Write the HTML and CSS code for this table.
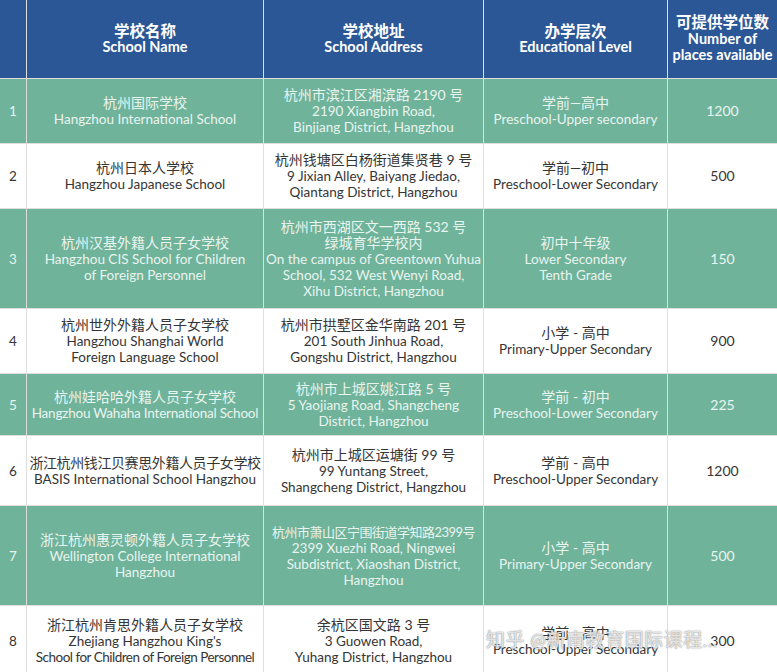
FILE: index.html
```html
<!DOCTYPE html>
<html lang="zh">
<head>
<meta charset="utf-8">
<title>杭州外籍人员子女学校</title>
<link rel="stylesheet" href="styles.css">
</head>
<body>
<div class="sheet">
  <div class="row head">
    <div class="c"></div>
    <div class="c"><span class="zh">学校名称</span><span>School Name</span></div>
    <div class="c"><span class="zh">学校地址</span><span>School Address</span></div>
    <div class="c"><span class="zh">办学层次</span><span>Educational Level</span></div>
    <div class="c"><span class="zh">可提供学位数</span><span>Number of</span><span>places available</span></div>
  </div>
  <div class="row g">
    <div class="c">1</div>
    <div class="c"><span class="zh">杭州国际学校</span><span>Hangzhou International School</span></div>
    <div class="c"><span class="zh">杭州市滨江区湘滨路 2190 号</span><span>2190 Xiangbin Road,</span><span>Binjiang District, Hangzhou</span></div>
    <div class="c"><span class="zh">学前—高中</span><span>Preschool-Upper secondary</span></div>
    <div class="c num">1200</div>
  </div>
  <div class="row w">
    <div class="c">2</div>
    <div class="c"><span class="zh">杭州日本人学校</span><span>Hangzhou Japanese School</span></div>
    <div class="c"><span class="zh">杭州钱塘区白杨街道集贤巷 9 号</span><span>9 Jixian Alley, Baiyang Jiedao,</span><span>Qiantang District, Hangzhou</span></div>
    <div class="c"><span class="zh">学前—初中</span><span>Preschool-Lower Secondary</span></div>
    <div class="c num">500</div>
  </div>
  <div class="row g">
    <div class="c">3</div>
    <div class="c"><span class="zh">杭州汉基外籍人员子女学校</span><span>Hangzhou CIS School for Children</span><span>of Foreign Personnel</span></div>
    <div class="c"><span class="zh">杭州市西湖区文一西路 532 号</span><span class="zh">绿城育华学校内</span><span>On the campus of Greentown Yuhua</span><span>School, 532 West Wenyi Road,</span><span>Xihu District, Hangzhou</span></div>
    <div class="c"><span class="zh">初中十年级</span><span>Lower Secondary</span><span>Tenth Grade</span></div>
    <div class="c num">150</div>
  </div>
  <div class="row w">
    <div class="c">4</div>
    <div class="c"><span class="zh">杭州世外外籍人员子女学校</span><span>Hangzhou Shanghai World</span><span>Foreign Language School</span></div>
    <div class="c"><span class="zh">杭州市拱墅区金华南路 201 号</span><span>201 South Jinhua Road,</span><span>Gongshu District, Hangzhou</span></div>
    <div class="c"><span class="zh">小学 - 高中</span><span>Primary-Upper Secondary</span></div>
    <div class="c num">900</div>
  </div>
  <div class="row g">
    <div class="c">5</div>
    <div class="c"><span class="zh">杭州娃哈哈外籍人员子女学校</span><span class="tight">Hangzhou Wahaha International School</span></div>
    <div class="c"><span class="zh">杭州市上城区姚江路 5 号</span><span>5 Yaojiang Road, Shangcheng</span><span>District, Hangzhou</span></div>
    <div class="c"><span class="zh">学前 - 初中</span><span>Preschool-Lower Secondary</span></div>
    <div class="c num">225</div>
  </div>
  <div class="row w">
    <div class="c">6</div>
    <div class="c"><span class="zh tight">浙江杭州钱江贝赛思外籍人员子女学校</span><span>BASIS International School Hangzhou</span></div>
    <div class="c"><span class="zh">杭州市上城区运塘街 99 号</span><span>99 Yuntang Street,</span><span>Shangcheng District, Hangzhou</span></div>
    <div class="c"><span class="zh">学前 - 高中</span><span>Preschool-Upper Secondary</span></div>
    <div class="c num">1200</div>
  </div>
  <div class="row g">
    <div class="c">7</div>
    <div class="c"><span class="zh">浙江杭州惠灵顿外籍人员子女学校</span><span>Wellington College International</span><span>Hangzhou</span></div>
    <div class="c"><span class="zh squeeze">杭州市萧山区宁围街道学知路2399号</span><span>2399 Xuezhi Road, Ningwei</span><span>Subdistrict, Xiaoshan District,</span><span>Hangzhou</span></div>
    <div class="c"><span class="zh">小学 - 高中</span><span>Primary-Upper Secondary</span></div>
    <div class="c num">500</div>
  </div>
  <div class="row w">
    <div class="c">8</div>
    <div class="c"><span class="zh">浙江杭州肯思外籍人员子女学校</span><span>Zhejiang Hangzhou King's</span><span class="tighter">School for Children of Foreign Personnel</span></div>
    <div class="c"><span class="zh">余杭区国文路 3 号</span><span>3 Guowen Road,</span><span>Yuhang District, Hangzhou</span></div>
    <div class="c"><span class="zh">学前 - 高中</span><span>Preschool-Upper Secondary</span></div>
    <div class="c num">300</div>
  </div>
  <div class="mark">知乎 @新南教育国际课程...</div>
</div>
</body>
</html>
```

FILE: styles.css
```css
html, body {
  margin: 0;
  padding: 0;
  background: #ffffff;
}
.sheet {
  position: relative;
  width: 777px;
  height: 672px;
  overflow: hidden;
  display: grid;
  grid-template-columns: 26px 236px 219px 183px 109px;
  grid-template-rows: 78px 64px 64px 99px 64px 61px 69px 99px 70px;
  gap: 1px;
  background: #dedede;
  font-family: "Lato", "Noto Sans CJK SC", sans-serif;
  font-size: 13.5px;
  line-height: 16px;
}
.row {
  display: contents;
}
.c {
  display: flex;
  flex-direction: column;
  align-items: center;
  justify-content: center;
  text-align: center;
  white-space: nowrap;
  overflow: visible;
}
.c span {
  display: block;
}
.zh {
  font-size: 14px;
}
.num {
  font-size: 14px;
}
.head .c {
  background: #2b5797;
  color: #ffffff;
  font-weight: 700;
  font-size: 14.5px;
  line-height: 16.5px;
}
.head .zh {
  font-size: 15.5px;
}
.g .c {
  background: #6fb39b;
  color: #e9f4ef;
}
.w .c {
  background: #ffffff;
  color: #353535;
}
.tight {
  letter-spacing: -0.2px;
}
.zh.tight {
  letter-spacing: -0.4px;
}
.tighter {
  letter-spacing: -0.5px;
}
.squeeze {
  font-size: 13px;
  letter-spacing: -0.5px;
}
.mark {
  position: absolute;
  left: 486px;
  top: 628px;
  font-size: 19px;
  line-height: 24px;
  color: rgba(255, 255, 255, 0.8);
  text-shadow: 0 0 1px rgba(110, 110, 110, 0.9), 0 0 2px rgba(150, 150, 150, 0.6);
  white-space: nowrap;
  letter-spacing: 0.5px;
}
```
